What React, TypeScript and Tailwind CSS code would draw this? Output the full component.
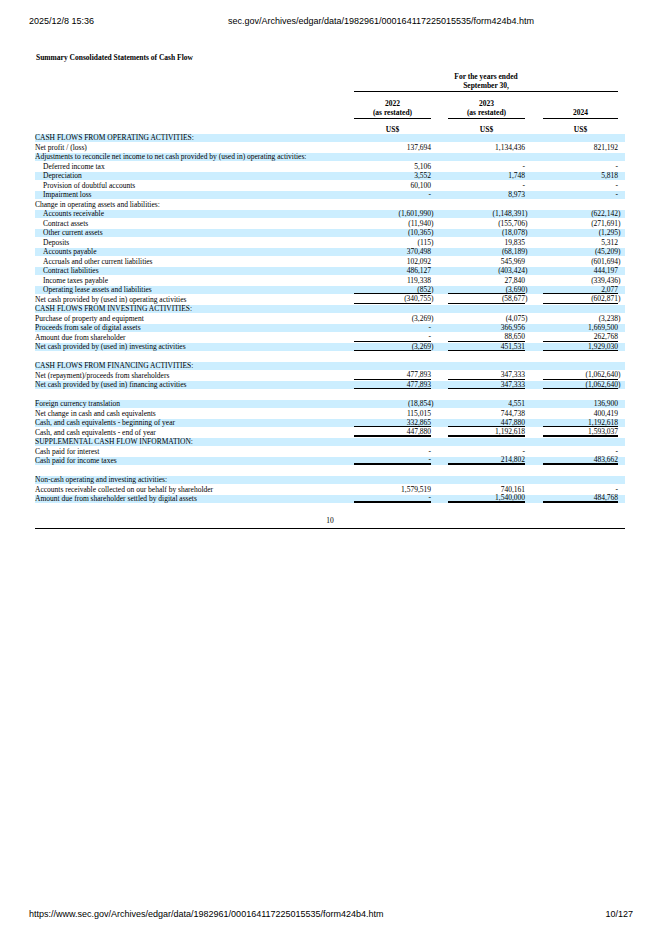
type Line = 'thin' | 'thick' | undefined;

interface Row {
  label: string;
  indent?: boolean;
  values?: string[];
  line?: Line;
}

const rows: Row[] = [
  { label: 'CASH FLOWS FROM OPERATING ACTIVITIES:' },
  { label: 'Net profit / (loss)', values: ['137,694', '1,134,436', '821,192'] },
  { label: 'Adjustments to reconcile net income to net cash provided by (used in) operating activities:' },
  { label: 'Deferred income tax', indent: true, values: ['5,106', '-', '-'] },
  { label: 'Depreciation', indent: true, values: ['3,552', '1,748', '5,818'] },
  { label: 'Provision of doubtful accounts', indent: true, values: ['60,100', '-', '-'] },
  { label: 'Impairment loss', indent: true, values: ['-', '8,973', '-'] },
  { label: 'Change in operating assets and liabilities:' },
  { label: 'Accounts receivable', indent: true, values: ['(1,601,990)', '(1,148,391)', '(622,142)'] },
  { label: 'Contract assets', indent: true, values: ['(11,940)', '(155,706)', '(271,691)'] },
  { label: 'Other current assets', indent: true, values: ['(10,365)', '(18,078)', '(1,295)'] },
  { label: 'Deposits', indent: true, values: ['(115)', '19,835', '5,312'] },
  { label: 'Accounts payable', indent: true, values: ['370,498', '(68,189)', '(45,209)'] },
  { label: 'Accruals and other current liabilities', indent: true, values: ['102,092', '545,969', '(601,694)'] },
  { label: 'Contract liabilities', indent: true, values: ['486,127', '(403,424)', '444,197'] },
  { label: 'Income taxes payable', indent: true, values: ['119,338', '27,840', '(339,436)'] },
  { label: 'Operating lease assets and liabilities', indent: true, values: ['(852)', '(3,690)', '2,077'], line: 'thin' },
  { label: 'Net cash provided by (used in) operating activities', values: ['(340,755)', '(58,677)', '(602,871)'], line: 'thin' },
  { label: 'CASH FLOWS FROM INVESTING ACTIVITIES:' },
  { label: 'Purchase of property and equipment', values: ['(3,269)', '(4,075)', '(3,238)'] },
  { label: 'Proceeds from sale of digital assets', values: ['-', '366,956', '1,669,500'] },
  { label: 'Amount due from shareholder', values: ['-', '88,650', '262,768'], line: 'thin' },
  { label: 'Net cash provided by (used in) investing activities', values: ['(3,269)', '451,531', '1,929,030'], line: 'thin' },
  { label: '' },
  { label: 'CASH FLOWS FROM FINANCING ACTIVITIES:' },
  { label: 'Net (repayment)/proceeds from shareholders', values: ['477,893', '347,333', '(1,062,640)'], line: 'thin' },
  { label: 'Net cash provided by (used in) financing activities', values: ['477,893', '347,333', '(1,062,640)'], line: 'thin' },
  { label: '' },
  { label: 'Foreign currency translation', values: ['(18,854)', '4,551', '136,900'] },
  { label: 'Net change in cash and cash equivalents', values: ['115,015', '744,738', '400,419'] },
  { label: 'Cash, and cash equivalents - beginning of year', values: ['332,865', '447,880', '1,192,618'], line: 'thin' },
  { label: 'Cash, and cash equivalents - end of year', values: ['447,880', '1,192,618', '1,593,037'], line: 'thick' },
  { label: 'SUPPLEMENTAL CASH FLOW INFORMATION:' },
  { label: 'Cash paid for interest', values: ['-', '-', '-'] },
  { label: 'Cash paid for income taxes', values: ['-', '214,802', '483,662'], line: 'thick' },
  { label: '' },
  { label: 'Non-cash operating and investing activities:' },
  { label: 'Accounts receivable collected on our behalf by shareholder', values: ['1,579,519', '740,161', '-'] },
  { label: 'Amount due from shareholder settled by digital assets', values: ['-', '1,540,000', '484,768'], line: 'thick' },
];

const colWidths = ['w-[77px]', 'w-[77px]', 'w-[75px]'];

function Amount({ value }: { value: string }) {
  // negative figures keep the closing paren outside the column edge
  if (value.endsWith(')')) {
    return (
      <span>
        {value.slice(0, -1)}
        <span className="-mr-[2.5px]">)</span>
      </span>
    );
  }
  return <span>{value}</span>;
}

function ValueCell({ value, width, line }: { value?: string; width: string; line: Line }) {
  const border =
    line === 'thick' ? 'border-b-2 border-black' : line === 'thin' ? 'border-b border-black' : '';
  return (
    <div className={`${width} flex justify-end items-center ${border}`}>
      {value !== undefined && <Amount value={value} />}
    </div>
  );
}

function TableRow({ row, index }: { row: Row; index: number }) {
  const blue = index % 2 === 0;
  return (
    <div className="py-[0.75px]">
      <div className={`flex h-[8px] ${blue ? 'bg-[#cceeff]' : ''}`}>
        <div className={`flex-1 flex items-center whitespace-nowrap ${row.indent ? 'pl-[8px]' : ''}`}>
          {row.label}
        </div>
        <ValueCell value={row.values?.[0]} width={colWidths[0]} line={row.line} />
        <div className="w-[17px]" />
        <ValueCell value={row.values?.[1]} width={colWidths[1]} line={row.line} />
        <div className="w-[18px]" />
        <ValueCell value={row.values?.[2]} width={colWidths[2]} line={row.line} />
        <div className="w-[7px]" />
      </div>
    </div>
  );
}

export default function App() {
  return (
    <div className="w-[662px] h-[936px] bg-white text-black flex flex-col font-['Liberation_Sans',Arial,sans-serif]">
      {/* Browser print header */}
      <div className="flex pt-[16px] pl-[29px] text-[9px] leading-[11px]">
        <div className="w-[199px]">2025/12/8 15:36</div>
        <div>sec.gov/Archives/edgar/data/1982961/000164117225015535/form424b4.htm</div>
      </div>

      <div className="pl-[35px] pr-[37px] font-['Liberation_Serif','Times_New_Roman',serif] text-[7.5px] leading-[8px]">
        <div className="mt-[26px] pl-[1px] font-bold text-[7.5px] leading-[9px]">
          Summary Consolidated Statements of Cash Flow
        </div>

        {/* Column headings */}
        <div className="flex mt-[9.5px] font-bold leading-[9px]">
          <div className="flex-1" />
          <div className="w-[264px] flex flex-col items-center border-b border-black pb-[1.5px]">
            <div>For the years ended</div>
            <div>September 30,</div>
          </div>
          <div className="w-[7px]" />
        </div>
        <div className="flex mt-[6.5px] font-bold leading-[9px]">
          <div className="flex-1" />
          <div className="w-[77px] flex flex-col items-center border-b border-black pb-[1.5px]">
            <div>2022</div>
            <div>(as restated)</div>
          </div>
          <div className="w-[17px]" />
          <div className="w-[77px] flex flex-col items-center border-b border-black pb-[1.5px]">
            <div>2023</div>
            <div>(as restated)</div>
          </div>
          <div className="w-[18px]" />
          <div className="w-[75px] flex flex-col items-center justify-end border-b border-black pb-[1.5px]">
            <div>2024</div>
          </div>
          <div className="w-[7px]" />
        </div>
        <div className="flex mt-[5.5px] font-bold leading-[9px]">
          <div className="flex-1" />
          <div className="w-[77px] text-center">US$</div>
          <div className="w-[17px]" />
          <div className="w-[77px] text-center">US$</div>
          <div className="w-[18px]" />
          <div className="w-[75px] text-center">US$</div>
          <div className="w-[7px]" />
        </div>

        {/* Statement rows */}
        <div>
          {rows.map((row, i) => (
            <TableRow key={i} row={row} index={i} />
          ))}
        </div>

        <div className="mt-[12.5px] text-center leading-[8px]">10</div>
        <div className="mt-[3px] border-b border-black" />
      </div>

      {/* Browser print footer */}
      <div className="mt-auto flex justify-between pl-[29px] pr-[29px] pb-[16px] text-[9px] leading-[11px]">
        <div>https://www.sec.gov/Archives/edgar/data/1982961/000164117225015535/form424b4.htm</div>
        <div>10/127</div>
      </div>
    </div>
  );
}
